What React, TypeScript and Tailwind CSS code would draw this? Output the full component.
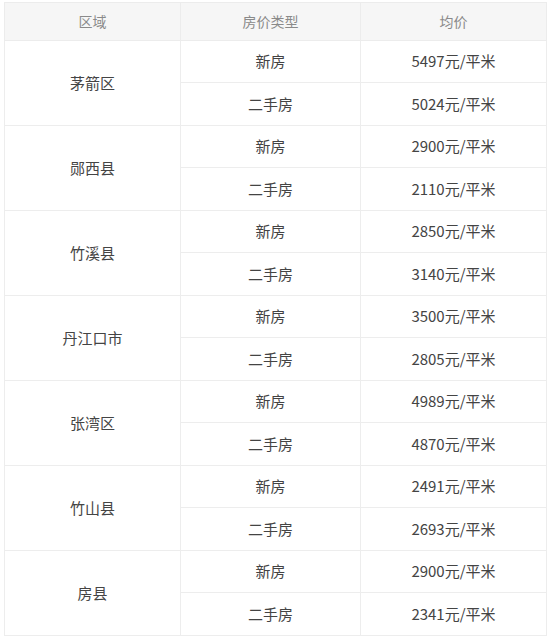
import React from "react";

const data: [string, string, string][] = [
  ["茅箭区", "5497", "5024"],
  ["郧西县", "2900", "2110"],
  ["竹溪县", "2850", "3140"],
  ["丹江口市", "3500", "2805"],
  ["张湾区", "4989", "4870"],
  ["竹山县", "2491", "2693"],
  ["房县", "2900", "2341"],
];

export default function App() {
  return (
    <div
      className="w-[550px] h-[641px] bg-white overflow-hidden pl-[4px] pt-[2px]"
      style={{ fontFamily: '"Noto Sans CJK SC", "Noto Sans", sans-serif' }}
    >
      <table className="w-[542px] border-collapse table-fixed text-[15px] text-[#444]">
        <colgroup>
          <col className="w-[176px]" />
          <col className="w-[180px]" />
          <col className="w-[186px]" />
        </colgroup>
        <thead>
          <tr className="h-[38px]">
            <th className="bg-[#f6f6f6] border border-[#ececec] font-normal text-[14px] text-[#8a8a8a]">区域</th>
            <th className="bg-[#f6f6f6] border border-[#ececec] font-normal text-[14px] text-[#8a8a8a]">房价类型</th>
            <th className="bg-[#f6f6f6] border border-[#ececec] font-normal text-[14px] text-[#8a8a8a]">均价</th>
          </tr>
        </thead>
        <tbody>
          {data.map(([name, a, b]) => (
            <React.Fragment key={name}>
              <tr className="h-[42px]">
                <td rowSpan={2} className="border border-[#ededed] text-center align-middle">
                  {name}
                </td>
                <td className="border border-[#ededed] text-center">新房</td>
                <td className="border border-[#ededed] text-center">{a}元/平米</td>
              </tr>
              <tr className="h-[43px]">
                <td className="border border-[#ededed] text-center">二手房</td>
                <td className="border border-[#ededed] text-center">{b}元/平米</td>
              </tr>
            </React.Fragment>
          ))}
        </tbody>
      </table>
    </div>
  );
}
